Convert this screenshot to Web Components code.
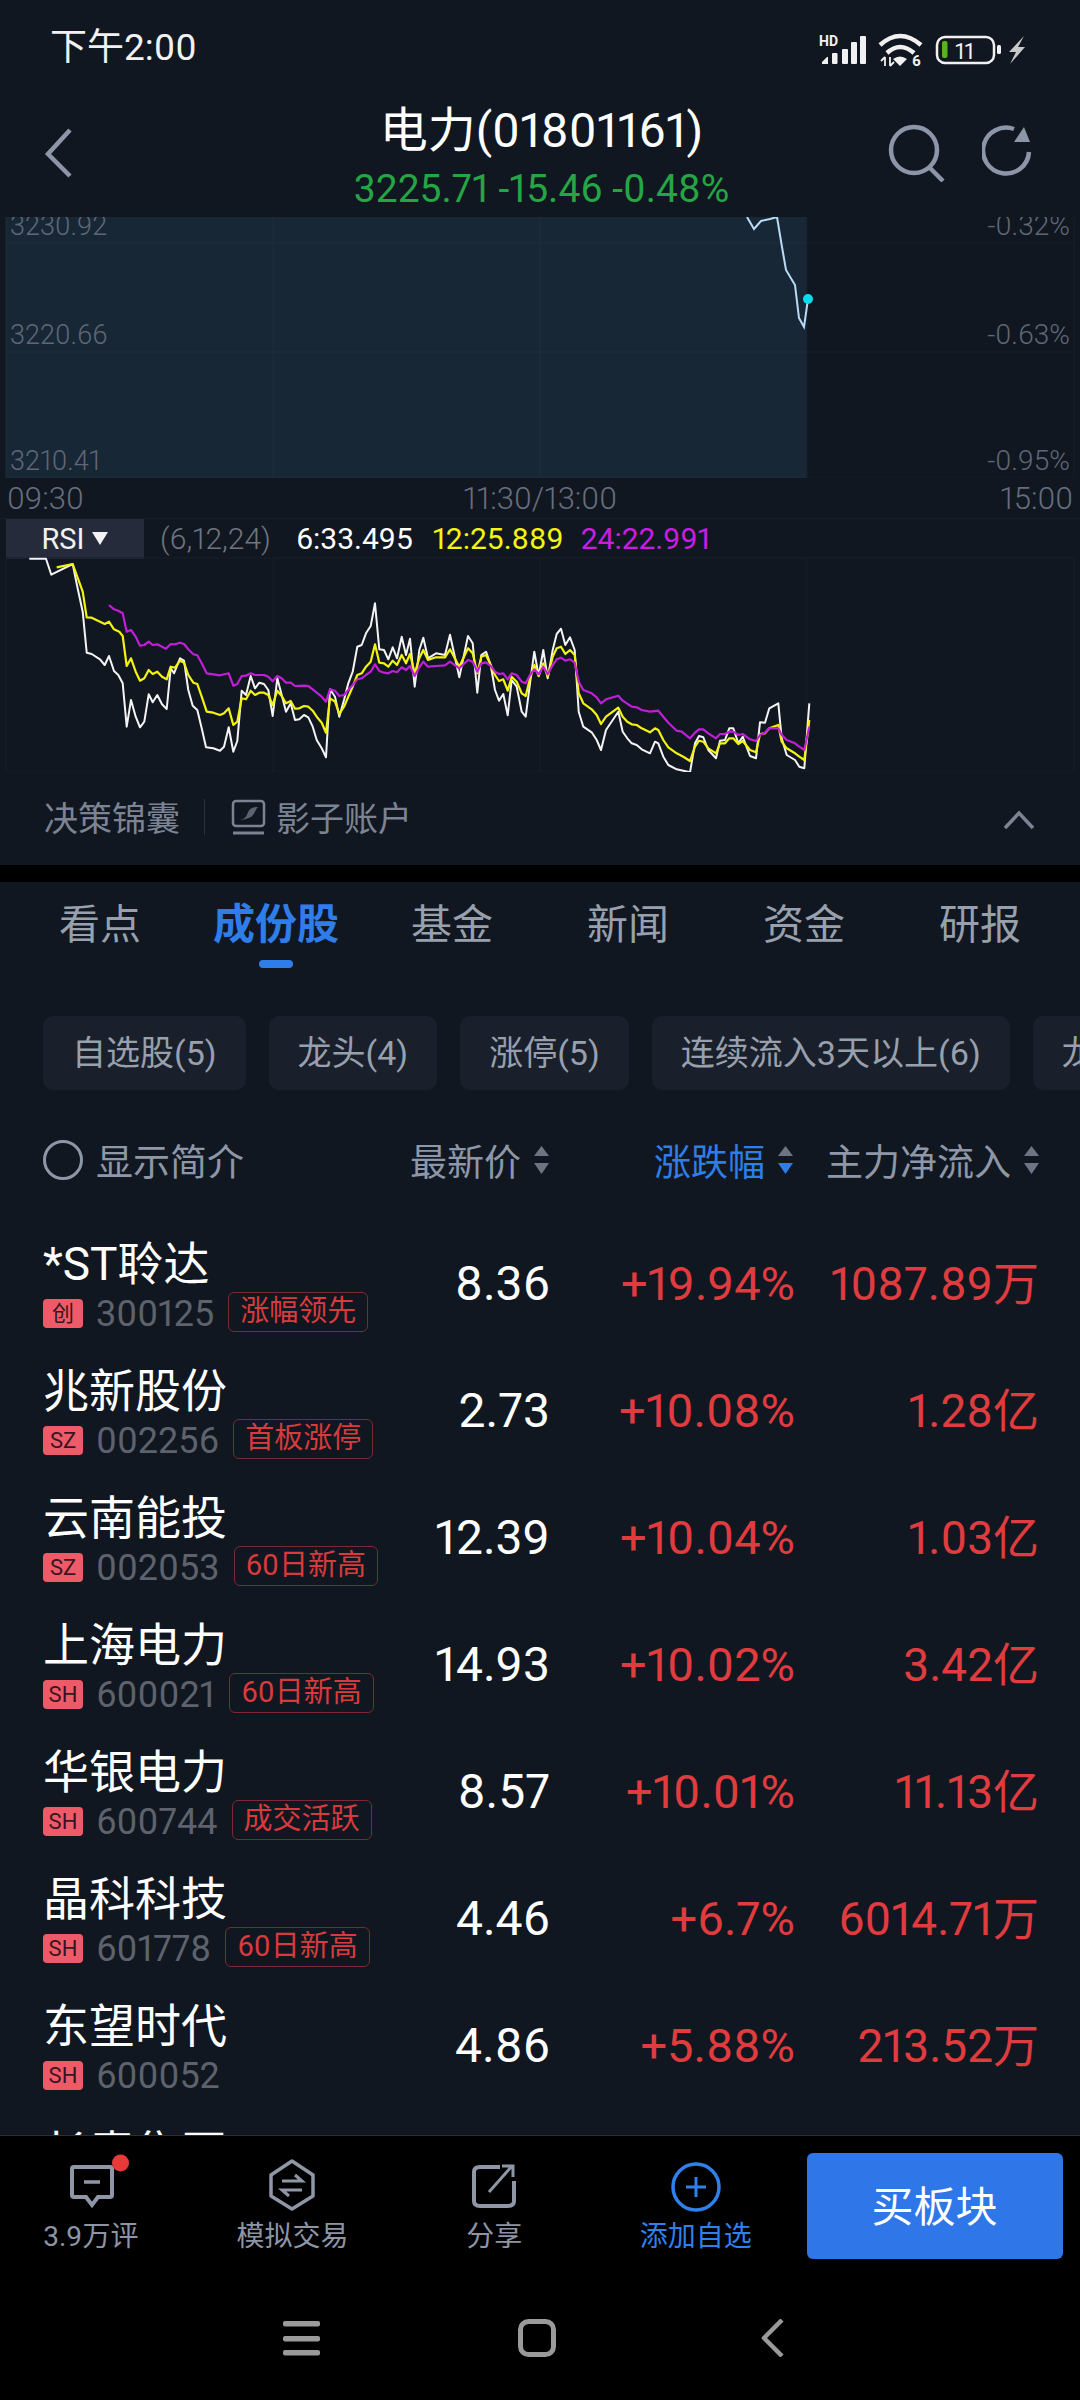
<!DOCTYPE html>
<html lang="zh">
<head>
<meta charset="utf-8">
<title>电力</title>
<style>
  html, body { margin: 0; padding: 0; background: #000; }
  body { font-family: Roboto, "Noto Sans CJK SC", sans-serif; font-variant-numeric: proportional-nums; width: 1080px; height: 2400px; overflow: hidden; }
  #page { display: flex; flex-direction: column; height: 2400px; }
  #page > * { flex: none; }
  #page > #list { flex: 1; min-height: 0; overflow: hidden; background: #111720; }
  #gap { height: 17px; background: #000; }
</style>
</head>
<body>
<div id="page">
  <status-bar></status-bar>
  <stock-header></stock-header>
  <price-chart></price-chart>
  <rsi-panel></rsi-panel>
  <tool-row></tool-row>
  <div id="gap"></div>
  <tab-bar></tab-bar>
  <chip-bar></chip-bar>
  <list-head></list-head>
  <div id="list">
    <stock-row badge="创" code="300125" tag="涨幅领先" price="8.36" pct="+19.94%" flow="1087.89万">*ST聆达</stock-row>
    <stock-row badge="SZ" code="002256" tag="首板涨停" price="2.73" pct="+10.08%" flow="1.28亿">兆新股份</stock-row>
    <stock-row badge="SZ" code="002053" tag="60日新高" price="12.39" pct="+10.04%" flow="1.03亿">云南能投</stock-row>
    <stock-row badge="SH" code="600021" tag="60日新高" price="14.93" pct="+10.02%" flow="3.42亿">上海电力</stock-row>
    <stock-row badge="SH" code="600744" tag="成交活跃" price="8.57" pct="+10.01%" flow="11.13亿">华银电力</stock-row>
    <stock-row badge="SH" code="601778" tag="60日新高" price="4.46" pct="+6.7%" flow="6014.71万">晶科科技</stock-row>
    <stock-row badge="SH" code="600052" price="4.86" pct="+5.88%" flow="213.52万">东望时代</stock-row>
    <stock-row badge="SZ" code="002616" price="4.21" pct="+5.25%" flow="98.30万">长青集团</stock-row>
  </div>
  <bottom-bar></bottom-bar>
  <nav-bar></nav-bar>
</div>

<script>
// shared font stack for every shadow root
const FONT = 'Roboto, "Noto Sans CJK SC", sans-serif';
const BG = '#111720';

class StatusBar extends HTMLElement {
  connectedCallback() {
    this.attachShadow({ mode: 'open' }).innerHTML = `
      <style>
        :host { display: flex; align-items: center; justify-content: space-between; height: 100px; padding: 0 50px; background: ${BG}; color: #f1f1f1; font-family: ${FONT}; }
        .time { font-size: 37px; font-weight: 400; line-height: 44px; margin-top: -4px; }
        svg { display: block; }
        text { font-family: Roboto, sans-serif; fill: #f1f1f1; }
      </style>
      <span class="time">下午2:00</span>
      <svg width="215" height="40" viewBox="815 30 215 40">
        <text x="819" y="46" font-size="14" font-weight="700">HD</text>
        <g fill="#f1f1f1">
          <path d="M822 64v-2l5-5h1v7z"/>
          <rect x="832" y="53" width="5.500" height="11" rx="1"/>
          <rect x="842" y="49" width="6" height="15" rx="1"/>
          <rect x="851" y="42" width="6" height="22" rx="1"/>
          <rect x="860" y="36" width="6" height="28" rx="1"/>
        </g>
        <g fill="none" stroke="#f1f1f1" stroke-width="4.500">
          <path d="M880 45Q900 27 921 45"/>
          <path d="M887 53Q900 41 914 53"/>
        </g>
        <path d="M893 59Q900 54 907 59L900 66Z" fill="#f1f1f1"/>
        <path d="M885 57v9M881 61l4-4M890 57v9M890 66l4-4" stroke="#f1f1f1" stroke-width="1.800" fill="none"/>
        <text x="912" y="66" font-size="15" font-weight="700">6</text>
        <rect x="937" y="37" width="57" height="26" rx="8" fill="none" stroke="#f1f1f1" stroke-width="2.500"/>
        <rect x="942" y="41" width="5.500" height="17" rx="2" fill="#56b21f"/>
        <text x="955" y="59" font-size="22">11</text>
        <rect x="997" y="45" width="4" height="9" rx="1.500" fill="#f1f1f1"/>
        <path d="M1024 36L1009 52L1016 52L1010 64L1025 47L1018 47Z" fill="#c9c9c9"/>
      </svg>`;
  }
}

class StockHeader extends HTMLElement {
  connectedCallback() {
    this.attachShadow({ mode: 'open' }).innerHTML = `
      <style>
        :host { display: grid; grid-template-columns: 1fr auto 1fr; height: 117px; padding: 6px 0 0; box-sizing: border-box; background: ${BG}; font-family: ${FONT}; }
        .mid { text-align: center; padding-left: 3px; }
        .title { font-size: 48px; line-height: 50px; color: #fff; font-weight: 400; }
        .sub { font-size: 39px; line-height: 44px; margin-top: 11px; color: #26a545; font-weight: 400; }
        .back { margin: 21px 0 0 43px; display: block; }
        .tools { justify-self: end; margin: 16px 48px 0 0; display: flex; gap: 36px; }
        svg { display: block; }
      </style>
      <div><svg class="back" width="32" height="52" viewBox="0 0 32 52"><path d="M27 3L5 27L27 49" fill="none" stroke="#8d96a8" stroke-width="4.500"/></svg></div>
      <div class="mid">
        <div class="title">电力(01801161)</div>
        <div class="sub">3225.71 -15.46 -0.48%</div>
      </div>
      <div class="tools">
        <svg width="58" height="60" viewBox="888 124 58 60" fill="none" stroke="#8d96a8" stroke-width="4.500">
          <circle cx="914" cy="152" r="23"/><path d="M929 169L943 183"/>
        </svg>
        <svg width="50" height="60" viewBox="982 124 50 60">
          <path d="M1029 154A23 23 0 1 1 1014 131" fill="none" stroke="#8d96a8" stroke-width="4.500"/>
          <path d="M1024 129L1014 144H1030Z" fill="#8d96a8"/>
        </svg>
      </div>`;
  }
}

class PriceChart extends HTMLElement {
  connectedCallback() {
    this.attachShadow({ mode: 'open' }).innerHTML = `
      <style>
        :host { display: block; position: relative; height: 301px; overflow: hidden; background: ${BG}; font-family: ${FONT}; font-size: 27px; color: #5f6776; font-weight: 300; }
        svg { position: absolute; left: 0; top: 0; }
        .l { position: absolute; left: 10px; line-height: 30px; }
        .r { position: absolute; right: 10px; line-height: 30px; font-size: 28px; }
        .axis { position: absolute; left: 7px; right: 7px; top: 261px; height: 40px; display: grid; grid-template-columns: 1fr auto 1fr; align-items: center; font-size: 31px; color: #666e7e; }
        .axis span:last-child { text-align: right; }
      </style>
      <svg width="1080" height="261" viewBox="0 217 1080 261">
        <rect x="6" y="217" width="801" height="261" fill="#182736"/>
        <path d="M6 243H807M6 352H807M6 478H807M6 217V478M273 217V478M540 217V478" stroke="#1e2c3b" stroke-width="1" fill="none"/>
        <path d="M807 243H1074M807 352H1074M807 478H1074M807 217V478M1074 217V478" stroke="#191f29" stroke-width="1" fill="none"/>
        <path d="M747 217L754 229L761 221L770 219L777 217L782 247L786 270L795 285L799 318L804 327L808 299" fill="none" stroke="#b9dcf5" stroke-width="2"/>
        <ellipse cx="808" cy="299" rx="5" ry="5" fill="#0adcf0"/>
      </svg>
      <span class="l" style="top:-6px">3230.92</span>
      <span class="l" style="top:103px">3220.66</span>
      <span class="l" style="top:229px">3210.41</span>
      <span class="r" style="top:-6px">-0.32%</span>
      <span class="r" style="top:103px">-0.63%</span>
      <span class="r" style="top:229px">-0.95%</span>
      <div class="axis"><span>09:30</span><span>11:30/13:00</span><span>15:00</span></div>`;
  }
}

// points read off the two full scale crops of the reference: a = left part, b = right part
const RSI_LINES = [
  { color: '#f4f4f4', width: 2,
    a: [88,56,138,56,154,104,218,72,232,140,248,215,260,338,275,342,300,358,314,375,327,348,342,393,355,405,368,430,380,560,393,480,407,530,420,562,433,545,446,463,458,487,472,465,486,493,500,507,512,385,522,400,540,355,552,362,565,450,578,497,592,510,605,565,618,622,640,625,660,632,672,620,686,562,700,635,712,603,725,452,738,465,752,408,765,445,778,428,792,432,805,450,818,528,832,415,845,465,858,515,872,490,885,540,898,538,912,525,925,532,938,560,950,600,965,625,978,652,990,448,1005,470,1018,530,1032,480,1045,430,1058,395,1072,320,1085,315,1098,280,1112,258,1125,190,1138,328,1152,330,1165,358,1178,322,1191,355],
    b: [5,290,18,345,30,296,44,440,58,330,70,293,84,355,108,340,135,345,150,284,178,412,204,288,218,310,232,458,244,345,258,335,272,375,285,450,297,482,310,462,323,526,335,420,350,440,365,515,377,530,390,430,403,335,416,408,430,330,443,415,458,330,470,282,483,266,496,315,510,292,524,330,536,515,550,560,575,577,590,600,603,630,618,570,655,515,668,575,682,595,695,610,710,615,725,628,750,640,765,605,775,610,790,650,805,675,830,688,850,692,870,697,885,610,897,588,910,592,925,630,948,655,960,602,975,600,988,565,1000,565,1015,610,1028,590,1050,648,1068,655,1080,547,1095,548,1108,505,1135,490,1145,595,1160,645,1185,660,1198,680,1213,685,1228,490] },
  { color: '#f3f311', width: 2.2,
    a: [170,82,218,72,248,155,260,232,275,233,300,245,314,252,327,245,342,268,358,275,368,288,380,378,393,355,407,395,420,422,433,415,446,390,458,402,472,395,486,410,500,418,512,380,525,383,540,362,552,368,565,405,580,428,592,432,605,470,620,515,640,518,660,525,672,520,686,505,700,555,712,545,725,475,738,478,752,452,765,465,778,458,792,458,805,465,818,495,832,452,845,468,858,490,872,483,885,506,898,505,912,498,925,500,938,512,950,530,965,548,978,578,990,475,1005,485,1018,522,1032,500,1045,470,1058,440,1072,405,1085,400,1098,380,1112,365,1125,313,1138,368,1152,370,1165,380,1178,362,1191,375],
    b: [5,345,18,370,30,342,44,400,58,355,70,330,84,360,108,352,135,352,150,328,178,380,204,325,218,340,232,400,244,350,258,345,272,375,285,405,297,423,310,418,323,452,335,410,350,425,365,460,377,468,390,415,403,375,416,408,430,370,443,410,458,350,470,325,483,320,496,342,510,330,524,345,536,460,550,490,575,508,590,525,603,552,618,530,655,503,668,530,682,545,695,553,710,555,725,565,750,577,765,565,775,570,790,600,805,622,830,640,850,650,870,663,885,620,897,602,910,605,925,625,948,640,960,610,975,610,988,595,1000,595,1015,612,1028,603,1050,630,1068,637,1080,582,1095,580,1108,565,1135,555,1145,605,1160,625,1185,640,1198,650,1213,660,1228,540] },
  { color: '#c01fd8', width: 2.2,
    a: [327,195,342,208,355,212,368,220,380,275,393,270,407,290,420,317,433,315,446,305,458,315,472,313,486,320,498,326,512,312,525,313,540,308,552,312,565,328,580,343,592,346,605,370,620,400,640,403,660,406,686,400,700,437,712,432,725,408,738,407,752,400,765,405,792,405,805,410,818,424,832,408,845,415,858,428,872,428,885,438,912,437,925,438,938,448,950,458,965,470,978,485,990,448,1005,452,1018,468,1032,465,1045,450,1058,435,1072,418,1085,415,1098,405,1112,395,1125,373,1138,393,1152,398,1165,400,1178,393,1191,397],
    b: [5,382,18,390,30,378,44,408,58,382,70,365,84,380,108,378,135,376,150,365,178,385,204,360,218,365,232,395,244,370,258,367,272,378,285,395,297,402,310,400,323,418,335,400,350,405,365,425,377,430,390,405,403,388,416,403,430,380,443,403,458,375,470,358,483,353,496,362,510,358,524,368,536,425,550,450,575,460,590,472,603,490,618,478,655,467,668,482,695,500,710,502,725,510,750,515,775,512,790,530,805,548,830,572,845,575,870,595,885,578,897,568,910,568,925,580,948,595,960,582,975,582,988,575,1000,575,1015,585,1028,582,1050,598,1068,603,1080,585,1095,578,1108,565,1135,565,1145,585,1160,600,1185,610,1198,620,1213,630,1228,560] }
];

function rsiPoints(line) {
  const out = [];
  for (let i = 0; i < line.a.length; i += 2) out.push((line.a[i] / 3).toFixed(1) + ',' + (540 + line.a[i + 1] / 3).toFixed(1));
  for (let i = 0; i < line.b.length; i += 2) out.push((400 + line.b[i] / 3).toFixed(1) + ',' + (540 + line.b[i + 1] / 3).toFixed(1));
  return out.join(' ');
}

class RsiPanel extends HTMLElement {
  connectedCallback() {
    const lines = RSI_LINES.map(l => `<polyline points="${rsiPoints(l)}" fill="none" stroke="${l.color}" stroke-width="${l.width}" stroke-linejoin="round"/>`).join('');
    this.attachShadow({ mode: 'open' }).innerHTML = `
      <style>
        :host { display: block; background: ${BG}; font-family: ${FONT}; font-weight: 400; }
        .head { display: flex; align-items: center; height: 40px; padding-left: 6px; font-size: 30px; border-top: 1px solid #181e28; box-sizing: border-box; }
        .sel { display: flex; align-items: center; justify-content: center; gap: 8px; width: 138px; height: 40px; background: #252b3b; color: #f2f2f2; font-size: 29px; }
        .tri { width: 0; height: 0; border: 8px solid transparent; border-top: 13px solid #f2f2f2; border-bottom: 0; }
        .v { margin-left: 16px; color: #6f7581; }
        svg { display: block; }
      </style>
      <div class="head">
        <div class="sel"><span>RSI</span><span class="tri"></span></div>
        <span class="v" style="font-weight:300">(6,12,24)</span>
        <span class="v" style="color:#fff;margin-left:25px">6:33.495</span>
        <span class="v" style="color:#f5f512;margin-left:20px">12:25.889</span>
        <span class="v" style="color:#c81ee0;margin-left:17px">24:22.991</span>
      </div>
      <svg width="1080" height="214" viewBox="0 558 1080 214" style="overflow:visible">
        <path d="M6 558H1074M6 772H1074M6 558V772M273 558V772M540 558V772M807 558V772M1074 558V772" stroke="#181e28" stroke-width="1" fill="none"/>
        ${lines}
      </svg>`;
  }
}

class ToolRow extends HTMLElement {
  connectedCallback() {
    this.attachShadow({ mode: 'open' }).innerHTML = `
      <style>
        :host { display: flex; align-items: center; height: 93px; box-sizing: border-box; padding: 0 45px 4px 44px; background: ${BG}; color: #7c8494; font-family: ${FONT}; font-size: 34px; font-weight: 400; }
        .sep { width: 1px; height: 36px; background: #2b313c; margin: 0 26px 0 24px; }
        .name { margin-left: 10px; }
        .up { margin-left: auto; position: relative; top: 3px; }
        svg { display: block; }
      </style>
      <span>决策锦囊</span>
      <span class="sep"></span>
      <svg width="35" height="36" viewBox="0 0 35 36" fill="none" stroke="#7c8494" stroke-width="2.500">
        <rect x="2" y="2" width="31" height="25" rx="3"/>
        <path d="M2 34H33" stroke-width="3"/>
        <path d="M8 21C12 21 16 18 17 13C19 9 23 8 27 8C24 11 24 15 20 18C16 20 12 21 8 21Z" fill="#7c8494" stroke="none" opacity=".7"/>
      </svg>
      <span class="name">影子账户</span>
      <svg class="up" width="32" height="20" viewBox="0 0 32 20"><path d="M2 18L16 3L30 18" fill="none" stroke="#7c8494" stroke-width="3.500"/></svg>`;
  }
}

class TabBar extends HTMLElement {
  connectedCallback() {
    const tabs = ['看点', '成份股', '基金', '新闻', '资金', '研报'];
    this.attachShadow({ mode: 'open' }).innerHTML = `
      <style>
        :host { display: grid; grid-template-columns: repeat(6, 176px); height: 134px; padding: 21px 0 0 12px; box-sizing: border-box; background: ${BG}; font-family: ${FONT}; font-size: 41px; color: #98a0ae; line-height: 44px; text-align: center; }
        .on { color: #2f7de9; font-weight: 700; font-size: 42px; }
        .bar { width: 34px; height: 8px; border-radius: 4px; background: #2f7de9; margin: 13px auto 0; }
      </style>
      ${tabs.map((t, i) => `<div class="${i === 1 ? 'on' : ''}">${t}${i === 1 ? '<div class="bar"></div>' : ''}</div>`).join('')}`;
  }
}

class ChipBar extends HTMLElement {
  connectedCallback() {
    const chips = ['自选股(5)', '龙头(4)', '涨停(5)', '连续流入3天以上(6)', '龙虎榜(2)'];
    this.attachShadow({ mode: 'open' }).innerHTML = `
      <style>
        :host { display: flex; gap: 23px; height: 74px; padding-left: 43px; overflow: hidden; background: ${BG}; font-family: ${FONT}; font-size: 34px; color: #98a0ae; font-weight: 400; }
        span { flex: none; display: flex; align-items: center; padding: 0 29px 5px; box-sizing: border-box; border-radius: 10px; background: #1a202b; }
      </style>
      ${chips.map(c => `<span>${c}</span>`).join('')}`;
  }
}

// little up and down triangles next to a column title
function sortArrows(down) {
  return `<svg width="17" height="28" viewBox="0 0 17 28" style="display:block;flex:none">
    <path d="M8.500 0L16 10H1Z" fill="#6d7585"/>
    <path d="M8.500 28L16 17H1Z" fill="${down ? '#2f7de9' : '#6d7585'}"/>
  </svg>`;
}

class ListHead extends HTMLElement {
  connectedCallback() {
    this.attachShadow({ mode: 'open' }).innerHTML = `
      <style>
        :host { display: grid; grid-template-columns: 300px 207px 244px 246px; align-items: center; height: 140px; padding-left: 43px; background: ${BG}; font-family: ${FONT}; font-size: 37px; color: #8e97a8; font-weight: 400; }
        .c { display: flex; align-items: center; justify-content: flex-end; gap: 12px; }
        .show { display: flex; align-items: center; gap: 13px; }
        .dot { width: 34px; height: 34px; border: 3px solid #8e97a8; border-radius: 50%; flex: none; }
        .blue { color: #2f7de9; }
      </style>
      <div class="show"><span class="dot"></span><span>显示简介</span></div>
      <div class="c"><span>最新价</span>${sortArrows(false)}</div>
      <div class="c"><span class="blue">涨跌幅</span>${sortArrows(true)}</div>
      <div class="c"><span>主力净流入</span>${sortArrows(false)}</div>`;
  }
}

class StockRow extends HTMLElement {
  connectedCallback() {
    const a = n => this.getAttribute(n) || '';
    const tag = a('tag') ? `<span class="tag">${a('tag')}</span>` : '';
    this.attachShadow({ mode: 'open' }).innerHTML = `
      <style>
        :host { display: grid; grid-template-columns: 332px 175px 245px 244px; height: 127px; padding-left: 43px; font-family: ${FONT}; }
        .left { padding-top: 9px; }
        .name { font-size: 46px; line-height: 50px; color: #fff; font-weight: 400; white-space: nowrap; }
        .meta { display: flex; align-items: center; height: 40px; margin-top: 3px; }
        .badge { flex: none; width: 40px; height: 29px; margin-top: 3px; border-radius: 4px; background: #ef5a68; color: #3a1420; font-size: 22px; line-height: 29px; text-align: center; }
        .code { margin: 3px 0 0 13px; font-size: 36px; color: #5d626c; font-weight: 400; }
        .tag { flex: none; margin-left: 14px; height: 40px; box-sizing: border-box; line-height: 36px; padding: 0 11px; border: 1px solid #7a2a30; border-radius: 6px; color: #d93a3d; font-size: 29px; font-weight: 400; white-space: nowrap; }
        .num { align-self: center; text-align: right; line-height: 50px; padding-bottom: 19px; font-size: 47px; font-weight: 400; color: #e03c3f; white-space: nowrap; }
        .flow { font-size: 46px; }
        .price { color: #fff; font-size: 48px; }
      </style>
      <div class="left">
        <div class="name"><slot></slot></div>
        <div class="meta"><span class="badge">${a('badge')}</span><span class="code">${a('code')}</span>${tag}</div>
      </div>
      <div class="num price">${a('price')}</div>
      <div class="num">${a('pct')}</div>
      <div class="num flow">${a('flow')}</div>`;
  }
}

class BottomBar extends HTMLElement {
  connectedCallback() {
    const g = '#8f97a7', b = '#2f80ed';
    this.attachShadow({ mode: 'open' }).innerHTML = `
      <style>
        :host { display: flex; height: 184px; box-sizing: border-box; padding-top: 23px; background: #000; border-top: 1px solid #2a2f3a; font-family: ${FONT}; font-size: 28px; color: #8d95a5; font-weight: 400; }
        .items { display: grid; grid-template-columns: repeat(4, 201.67px); margin-left: -10px; height: 110px; }
        .it { display: flex; flex-direction: column; align-items: center; gap: 3px; }
        .blue { color: #2f80ed; }
        svg { display: block; overflow: visible; }
        button { margin: -6px 0 0 10px; padding: 0 0 6px; width: 256px; height: 106px; border: 0; border-radius: 6px; background: #2f76e8; color: #fff; font: 400 42px ${FONT}; }
      </style>
      <div class="items">
        <div class="it">
          <svg width="60" height="52" viewBox="0 0 60 52" fill="none" stroke="${g}" stroke-width="4">
            <path d="M13 8H49Q51 8 51 10V36Q51 38 49 38H37L31 46L25 38H13Q11 38 11 36V10Q11 8 13 8Z"/>
            <path d="M23 23H39" stroke-width="3.500"/>
            <ellipse cx="59.500" cy="4" rx="8.500" ry="8.500" fill="#e93a3a" stroke="none"/>
          </svg>
          <span>3.9万评</span>
        </div>
        <div class="it">
          <svg width="60" height="52" viewBox="0 0 60 52" fill="none" stroke="${g}" stroke-width="3.500">
            <path d="M30 2L51 16V37L30 50L9 37V16Z" stroke-linejoin="round"/>
            <path d="M20 22H40L33 16M40 31H20L27 37" stroke-width="3"/>
          </svg>
          <span>模拟交易</span>
        </div>
        <div class="it">
          <svg width="60" height="52" viewBox="0 0 60 52" fill="none" stroke="${g}" stroke-width="4">
            <path d="M36 8H16Q10 8 10 13V42Q10 47 16 47H44Q50 47 50 42V22"/>
            <path d="M25 33L48 7M38 7H49V18" stroke-width="3"/>
          </svg>
          <span>分享</span>
        </div>
        <div class="it blue">
          <svg width="60" height="52" viewBox="0 0 60 52" fill="none" stroke="${b}" stroke-width="3.500">
            <circle cx="30" cy="28" r="23"/><path d="M20 28H40M30 18V38" stroke-width="3"/>
          </svg>
          <span>添加自选</span>
        </div>
      </div>
      <button>买板块</button>`;
  }
}

class NavBar extends HTMLElement {
  connectedCallback() {
    this.attachShadow({ mode: 'open' }).innerHTML = `
      <style>
        :host { display: flex; align-items: flex-start; height: 81px; padding-left: 283px; background: #000; }
        svg { display: block; flex: none; }
      </style>
      <svg width="37" height="38" viewBox="0 0 37 38" fill="#9a9a9a">
        <rect x="0" y="2" width="37" height="5.500" rx="2"/><rect x="0" y="17" width="37" height="5.500" rx="2"/><rect x="0" y="31" width="37" height="5.500" rx="2"/>
      </svg>
      <svg style="margin-left:198px" width="38" height="38" viewBox="0 0 38 38"><rect x="2.500" y="2.500" width="33" height="33" rx="8" fill="none" stroke="#9a9a9a" stroke-width="5"/></svg>
      <svg style="margin-left:204px" width="24" height="38" viewBox="0 0 24 38"><path d="M22 1L4 19L22 37" fill="none" stroke="#9a9a9a" stroke-width="4.500" stroke-linejoin="round"/></svg>`;
  }
}

customElements.define('status-bar', StatusBar);
customElements.define('stock-header', StockHeader);
customElements.define('price-chart', PriceChart);
customElements.define('rsi-panel', RsiPanel);
customElements.define('tool-row', ToolRow);
customElements.define('tab-bar', TabBar);
customElements.define('chip-bar', ChipBar);
customElements.define('list-head', ListHead);
customElements.define('stock-row', StockRow);
customElements.define('bottom-bar', BottomBar);
customElements.define('nav-bar', NavBar);
</script>
</body>
</html>
